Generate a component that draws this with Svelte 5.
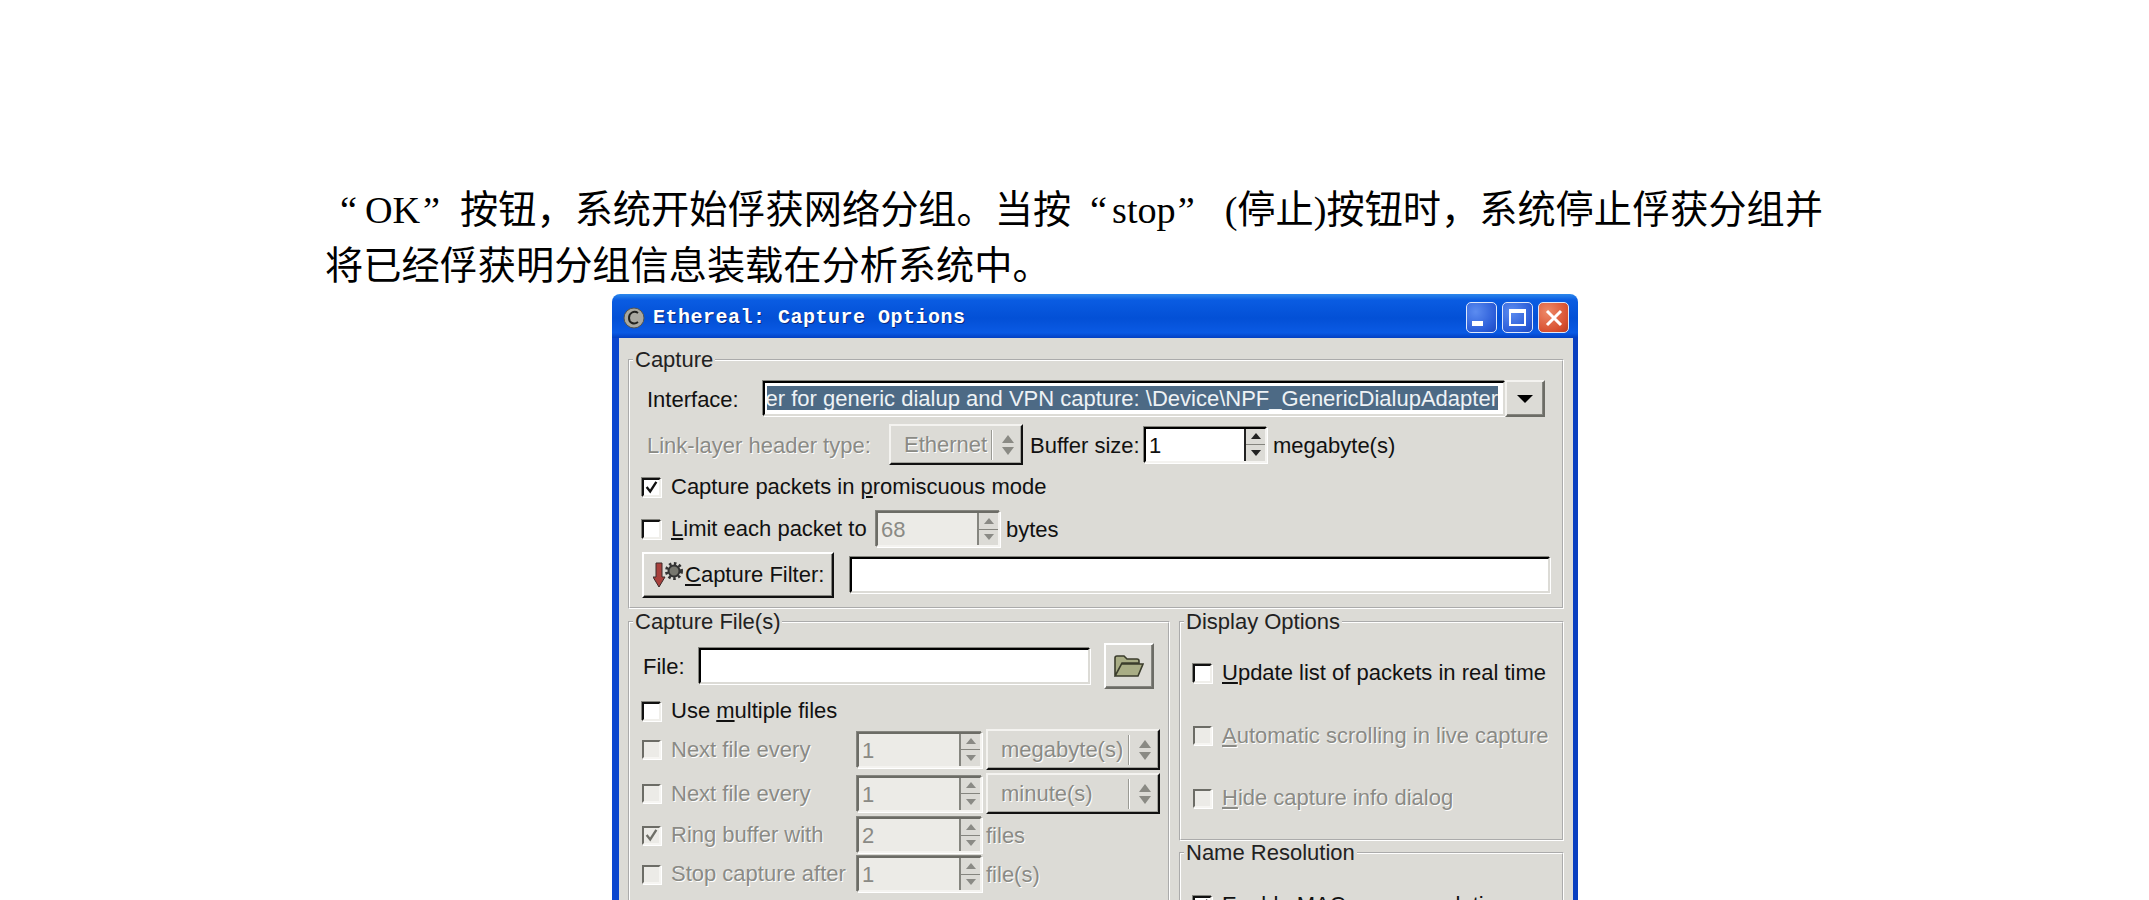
<script>
  const nextRows = [
    { label: 'Next file every', value: '1', combo: 'megabyte(s)' },
    { label: 'Next file every', value: '1', combo: 'minute(s)' }
  ]
</script>

{#snippet check(on, off)}
  <span class="check" class:off>
    {#if on}
      <svg viewBox="0 0 17 17" width="17" height="17" aria-hidden="true">
        <path d="M3 8 L7 13 L14 2" fill="none" stroke={off ? '#6f6f68' : '#111'} stroke-width="2.6"></path>
      </svg>
    {/if}
  </span>
{/snippet}

{#snippet spin(value, off, width)}
  <span class="spin" class:off style="width: {width}px">
    <span class="val">{value}</span>
    <span class="arrows">
      <span class="up"></span>
      <span class="down"></span>
    </span>
  </span>
{/snippet}

{#snippet combo(text, width)}
  <span class="combo" style="width: {width}px">
    <span class="combo-text">{text}</span>
    <span class="sep"></span>
    <svg viewBox="0 0 14 24" width="14" height="24" aria-hidden="true">
      <path d="M7 2 L13 10 H1 Z M1 14 H13 L7 22 Z" fill="#8a8a84"></path>
    </svg>
  </span>
{/snippet}

<div class="page">
  <div class="para">
    <p class="first"><span class="q1">“</span>OK<span class="q2">”</span>按钮&#xFF0C;系统开始俘获网络分组。当按<span class="q3">“</span>stop<span class="q4">”</span>(停止)按钮时&#xFF0C;系统停止俘获分组并</p>
    <p>将已经俘获明分组信息装载在分析系统中。</p>
  </div>

  <div class="window">
    <div class="titlebar">
      <svg class="app-icon" viewBox="0 0 22 22" width="22" height="22" aria-hidden="true">
        <circle cx="11" cy="11" r="10" fill="#a9a8a0" stroke="#55554f"></circle>
        <path d="M15 6 C11 3 6 6 6 11 C6 16 11 18 15 15" fill="none" stroke="#22221f" stroke-width="2"></path>
      </svg>
      <span class="title">Ethereal: Capture Options</span>
      <div class="controls">
        <span class="ctl">
          <span class="min-bar"></span>
        </span>
        <span class="ctl">
          <span class="max-box"></span>
        </span>
        <span class="ctl close">
          <svg viewBox="0 0 20 20" width="20" height="20" aria-hidden="true">
            <path d="M3 3 L17 17 M17 3 L3 17" stroke="#fff" stroke-width="3"></path>
          </svg>
        </span>
      </div>
    </div>

    <div class="body">
      <fieldset class="capture">
        <legend>Capture</legend>

        <div class="row r-iface">
          <span class="lbl" style="width: 116px">Interface:</span>
          <span class="entry iface">
            <span class="sel">er for generic dialup and VPN capture: \Device\NPF_GenericDialupAdapter</span>
          </span>
          <span class="btn drop">
            <svg viewBox="0 0 16 8" width="16" height="8" aria-hidden="true"><path d="M0 0 H16 L8 8 Z" fill="#000"></path></svg>
          </span>
        </div>

        <div class="row r-link">
          <span class="lbl dim" style="width: 242px">Link-layer header type:</span>
          {@render combo('Ethernet', 134)}
          <span class="lbl buf" style="width: 114px">Buffer size:</span>
          {@render spin('1', false, 123)}
          <span class="after">megabyte(s)</span>
        </div>

        <div class="row r-prom">
          {@render check(true, false)}
          <span class="txt">Capture packets in <u>p</u>romiscuous mode</span>
        </div>

        <div class="row r-limit">
          {@render check(false, false)}
          <span class="txt" style="width: 205px"><u>L</u>imit each packet to</span>
          {@render spin('68', true, 124)}
          <span class="after">bytes</span>
        </div>

        <div class="row r-filter">
          <span class="btn filter-btn">
            <svg viewBox="0 0 30 26" width="30" height="26" aria-hidden="true">
              <path d="M3 1 H9 V15 H12 L6 25 L0 15 H3 Z" fill="#a8403c" stroke="#3d2a2a"></path>
              <circle cx="21" cy="9" r="5.5" fill="#77776f" stroke="#333" stroke-width="2"></circle>
              <circle cx="21" cy="9" r="7.5" fill="none" stroke="#333" stroke-width="3" stroke-dasharray="2.5 2.5"></circle>
            </svg>
            <span><u>C</u>apture Filter:</span>
          </span>
          <span class="entry filter-entry"></span>
        </div>
      </fieldset>

      <div class="lower">
        <fieldset class="files">
          <legend>Capture File(s)</legend>

          <div class="row r-file">
            <span class="lbl file-lbl">File:</span>
            <span class="entry file-entry"></span>
            <span class="btn folder">
              <svg viewBox="0 0 30 24" width="30" height="24" aria-hidden="true">
                <path d="M1 22 V4 Q1 2 3 2 H10 L13 5 H23 Q25 5 25 7 V9 H8 L1 22 H24 L29 10 H8" fill="#a9ad85" stroke="#3b3d2c" stroke-width="1.6"></path>
              </svg>
            </span>
          </div>

          <div class="row r-multi">
            {@render check(false, false)}
            <span class="txt">Use <u>m</u>ultiple files</span>
          </div>

          {#each nextRows as r, i}
            <div class="row r-next" class:second={i === 1}>
              {@render check(false, true)}
              <span class="txt dim" style="width: 186px">{r.label}</span>
              {@render spin(r.value, true, 125)}
              <span class="next-combo">{@render combo(r.combo, 174)}</span>
            </div>
          {/each}

          <div class="row r-spin">
            {@render check(true, true)}
            <span class="txt dim" style="width: 186px">Ring buffer with</span>
            {@render spin('2', true, 125)}
            <span class="after dim tight">files</span>
          </div>

          <div class="row r-spin">
            {@render check(false, true)}
            <span class="txt dim" style="width: 186px">Stop capture after</span>
            {@render spin('1', true, 125)}
            <span class="after dim tight">file(s)</span>
          </div>
        </fieldset>

        <div class="side">
          <fieldset class="display">
            <legend>Display Options</legend>
            <div class="row r-opt">
              {@render check(false, false)}
              <span class="txt"><u>U</u>pdate list of packets in real time</span>
            </div>
            <div class="row r-opt">
              {@render check(false, true)}
              <span class="txt dim"><u>A</u>utomatic scrolling in live capture</span>
            </div>
            <div class="row r-opt">
              {@render check(false, true)}
              <span class="txt dim"><u>H</u>ide capture info dialog</span>
            </div>
          </fieldset>

          <fieldset class="names">
            <legend>Name Resolution</legend>
            <div class="row r-opt">
              {@render check(true, false)}
              <span class="txt">Enable <u>M</u>AC name resolution</span>
            </div>
          </fieldset>
        </div>
      </div>
    </div>
  </div>
</div>

<style>
  :global(body) {
    margin: 0;
    background: #fff;
  }

  .page {
    height: 900px;
    overflow: hidden;
    background: #fff;
  }

  .para {
    padding: 182px 0 0 325px;
    font-family: 'Liberation Serif', 'Noto Sans CJK SC', serif;
    font-size: 38.2px;
    line-height: 56px;
    color: #000;
  }

  .para p {
    margin: 0;
    white-space: nowrap;
  }

  .first {
    padding-left: 15px;
  }

  .q1 {
    margin-right: 8px;
  }

  .q2 {
    margin: 0 20px 0 3px;
  }

  .q3 {
    margin: 0 5px 0 19px;
  }

  .q4 {
    margin: 0 30px 0 2px;
  }

  .window {
    width: 966px;
    margin-left: 612px;
    font-family: 'Liberation Sans', Arial, sans-serif;
    font-size: 22px;
    color: #111;
  }

  .titlebar {
    height: 44px;
    display: flex;
    align-items: center;
    padding: 3px 9px 0 11px;
    box-sizing: border-box;
    border-radius: 8px 8px 0 0;
    background: linear-gradient(#2c88ec 0, #0a5ce2 14%, #0350d6 55%, #0a5ae4 88%, #0340c2 100%);
  }

  .title {
    margin-left: 8px;
    font-family: 'Liberation Mono', monospace;
    font-weight: 700;
    font-size: 20px;
    letter-spacing: 0.5px;
    color: #fff;
    text-shadow: 1px 1px 0 #0a2a80;
  }

  .controls {
    margin-left: auto;
    display: flex;
    gap: 5px;
  }

  .ctl {
    width: 31px;
    height: 31px;
    box-sizing: border-box;
    border: 1px solid #dfe8fb;
    border-radius: 5px;
    background: radial-gradient(circle at 30% 30%, #5c8cf0, #2a5cd8 70%, #1c48c0);
    display: flex;
    align-items: center;
    justify-content: center;
  }

  .close {
    background: radial-gradient(circle at 30% 30%, #ee8a68, #d85030 70%, #b83c20);
  }

  .min-bar {
    width: 11px;
    height: 5px;
    background: #fff;
    align-self: flex-end;
    margin: 0 8px 6px 0;
  }

  .max-box {
    width: 17px;
    height: 17px;
    box-sizing: border-box;
    border: 2px solid #fff;
    border-top-width: 4px;
  }

  .body {
    height: 660px;
    box-sizing: border-box;
    padding: 10px 9px 0;
    background: #dcdbd6;
    border-left: 7px solid #0b46cf;
    border-right: 5px solid #0a3fc0;
  }

  fieldset {
    margin: 0;
    min-width: 0;
    border: 2px groove #fff;
    box-sizing: border-box;
  }

  legend {
    margin-left: -9px;
    padding: 0 2px;
    line-height: 24px;
    color: #222;
  }

  .capture {
    width: 936px;
    padding: 8px 12px 9px;
  }

  .lower {
    display: flex;
    gap: 9px;
    margin-top: 1px;
  }

  .files {
    width: 542px;
    height: 700px;
    padding: 9px 6px 0 12px;
  }

  .side {
    width: 385px;
  }

  .display {
    height: 231px;
    padding: 29px 12px 0;
  }

  .names {
    height: 200px;
    padding: 30px 12px 0;
  }

  .row {
    display: flex;
    align-items: center;
    white-space: nowrap;
  }

  .lbl,
  .txt,
  .after {
    display: inline-block;
  }

  .lbl,
  .after {
    padding-top: 2px;
  }

  .dim {
    color: #8a8a85;
    text-shadow: 1px 1px 0 #fff;
  }

  .txt {
    margin-left: 10px;
  }

  .after {
    margin-left: 6px;
  }

  .tight {
    margin-left: 4px;
  }

  .r-iface {
    height: 37px;
    margin-left: 5px;
  }

  .r-link {
    height: 41px;
    margin: 7px 0 0 5px;
  }

  .buf {
    margin-left: 7px;
  }

  .r-prom {
    height: 20px;
    margin-top: 12px;
  }

  .r-limit {
    height: 36px;
    margin-top: 14px;
  }

  .r-filter {
    height: 46px;
    margin-top: 5px;
    gap: 16px;
  }

  .r-file {
    height: 46px;
  }

  .file-lbl {
    width: 56px;
    margin-left: 1px;
  }

  .r-multi {
    height: 20px;
    margin-top: 12px;
  }

  .r-next {
    height: 41px;
    margin-top: 8px;
  }

  .r-next.second {
    margin-top: 3px;
  }

  .next-combo {
    margin-left: 4px;
    display: flex;
  }

  .r-spin {
    height: 36px;
    margin-top: 3px;
  }

  .r-opt {
    height: 20px;
    margin-bottom: 42.5px;
  }

  .check {
    flex: none;
    width: 19px;
    height: 19px;
    box-sizing: border-box;
    background: #fff;
    border: 2px solid;
    border-color: #111 #f0efeb #f0efeb #111;
    box-shadow: -1px -1px 0 #85857f, 1px 1px 0 #fff;
    display: flex;
    align-items: center;
    justify-content: center;
  }

  .check.off {
    background: #ecebe7;
    border-color: #6c6c66 #f6f5f2 #f6f5f2 #6c6c66;
    box-shadow: 1px 1px 0 #fff;
  }

  .entry {
    display: flex;
    box-sizing: border-box;
    background: #fff;
    border: 2px solid;
    border-color: #000 #dcdbd6 #dcdbd6 #000;
    box-shadow: -1px -1px 0 #85857f, 1px 1px 0 #fff;
  }

  .iface {
    width: 742px;
    height: 35px;
    padding: 3px 5px 4px 2px;
    overflow: hidden;
    justify-content: flex-end;
    align-items: stretch;
  }

  .sel {
    flex: 1;
    display: flex;
    justify-content: flex-end;
    align-items: center;
    overflow: hidden;
    padding-top: 2px;
    background: #4d6a85;
    color: #eef2f5;
  }

  .filter-entry {
    width: 700px;
    height: 36px;
  }

  .file-entry {
    width: 391px;
    height: 36px;
  }

  .btn {
    display: flex;
    align-items: center;
    justify-content: center;
    box-sizing: border-box;
    background: #dcdbd6;
    border: 2px solid;
    border-color: #fff #111 #111 #fff;
    box-shadow: inset -1px -1px 0 #85857f;
  }

  .drop {
    width: 40px;
    height: 37px;
    border-color: #f4f3f0 #6c6c66 #6c6c66 #f4f3f0;
  }

  .filter-btn {
    width: 192px;
    height: 46px;
    gap: 2px;
    justify-content: flex-start;
    padding-left: 9px;
  }

  .folder {
    width: 50px;
    height: 46px;
    margin-left: 14px;
    border-color: #fff #6c6c66 #6c6c66 #fff;
  }

  .spin {
    flex: none;
    height: 36px;
    display: flex;
    box-sizing: border-box;
    background: #fff;
    border: 2px solid;
    border-color: #000 #f4f3f0 #f4f3f0 #000;
    box-shadow: -1px -1px 0 #85857f, 1px 1px 0 #fff;
  }

  .spin.off {
    background: #ecebe7;
    border-color: #6c6c66 #f4f3f0 #f4f3f0 #6c6c66;
  }

  .val {
    flex: 1;
    padding-left: 3px;
    line-height: 33px;
  }

  .off .val {
    color: #8a8a85;
  }

  .arrows {
    width: 19px;
    display: flex;
    flex-direction: column;
    border-left: 2px solid #222;
    background: #dcdbd6;
  }

  .off .arrows {
    border-left-color: #85857f;
  }

  .up,
  .down {
    flex: 1;
    display: flex;
    align-items: center;
    justify-content: center;
  }

  .up {
    border-bottom: 1px solid #85857f;
  }

  .up::before,
  .down::before {
    content: '';
    border: 5px solid transparent;
  }

  .up::before {
    border-top: 0;
    border-bottom: 6px solid #222;
  }

  .down::before {
    border-bottom: 0;
    border-top: 6px solid #222;
  }

  .off .up::before {
    border-bottom-color: #8a8a85;
  }

  .off .down::before {
    border-top-color: #8a8a85;
  }

  .combo {
    flex: none;
    height: 41px;
    display: flex;
    align-items: center;
    box-sizing: border-box;
    padding: 0 6px 0 13px;
    background: #dcdbd6;
    border: 2px solid;
    border-color: #f4f3f0 #111 #111 #f4f3f0;
    box-shadow: inset -1px -1px 0 #a5a59f;
  }

  .combo-text {
    flex: 1;
    color: #8a8a85;
    text-shadow: 1px 1px 0 #fff;
  }

  .sep {
    width: 2px;
    height: 30px;
    margin-right: 8px;
    background: linear-gradient(90deg, #9a9a94 50%, #fff 50%);
  }
</style>
